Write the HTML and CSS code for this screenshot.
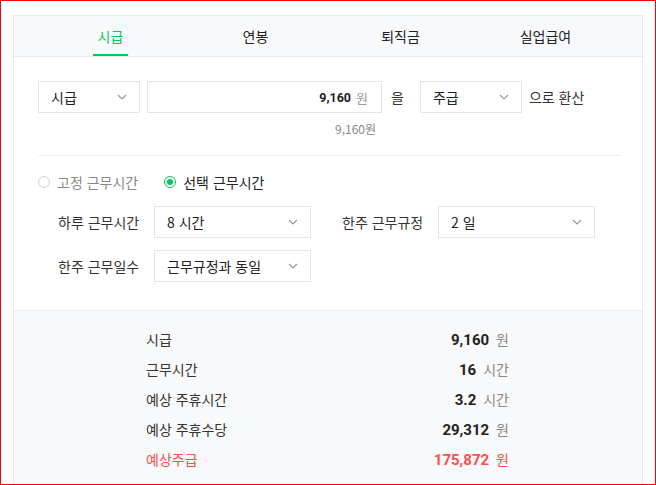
FILE: index.html
```html
<!DOCTYPE html>
<html lang="ko">
<head>
<meta charset="utf-8">
<title>시급 계산기</title>
<link rel="stylesheet" href="styles.css">
</head>
<body>
<div class="frame">
  <div class="calc">
    <div class="tabs">
      <div class="tab active"><span>시급</span></div>
      <div class="tab"><span>연봉</span></div>
      <div class="tab"><span>퇴직금</span></div>
      <div class="tab"><span>실업급여</span></div>
    </div>
    <div class="panel">
      <div class="conv">
        <div class="select narrow"><span>시급</span><svg class="chev" width="10" height="6" viewBox="0 0 10 6"><polyline points="1,1 5,5 9,1"/></svg></div>
        <div class="amount"><b>9,160</b><span class="unit">원</span></div>
        <span class="word w1">을</span>
        <div class="select narrow"><span>주급</span><svg class="chev" width="10" height="6" viewBox="0 0 10 6"><polyline points="1,1 5,5 9,1"/></svg></div>
        <span class="word w2">으로 환산</span>
      </div>
      <div class="hint">9,160원</div>
      <div class="divider"></div>
      <div class="radios">
        <div class="radio"><span class="dot"></span><span>고정 근무시간</span></div>
        <div class="radio on"><span class="dot"></span><span>선택 근무시간</span></div>
      </div>
      <div class="field-row">
        <div class="field"><span class="label">하루 근무시간</span><div class="select wide"><span>8 시간</span><svg class="chev" width="10" height="6" viewBox="0 0 10 6"><polyline points="1,1 5,5 9,1"/></svg></div></div>
        <div class="field"><span class="label">한주 근무규정</span><div class="select wide"><span>2 일</span><svg class="chev" width="10" height="6" viewBox="0 0 10 6"><polyline points="1,1 5,5 9,1"/></svg></div></div>
      </div>
      <div class="field-row">
        <div class="field"><span class="label">한주 근무일수</span><div class="select wide"><span>근무규정과 동일</span><svg class="chev" width="10" height="6" viewBox="0 0 10 6"><polyline points="1,1 5,5 9,1"/></svg></div></div>
      </div>
    </div>
    <div class="result">
      <div class="res-row"><span class="res-label">시급</span><span class="res-val"><b>9,160</b><span class="unit">원</span></span></div>
      <div class="res-row"><span class="res-label">근무시간</span><span class="res-val"><b>16</b><span class="unit">시간</span></span></div>
      <div class="res-row"><span class="res-label">예상 주휴시간</span><span class="res-val"><b>3.2</b><span class="unit">시간</span></span></div>
      <div class="res-row"><span class="res-label">예상 주휴수당</span><span class="res-val"><b>29,312</b><span class="unit">원</span></span></div>
      <div class="res-row total"><span class="res-label">예상주급</span><span class="res-val"><b>175,872</b><span class="unit">원</span></span></div>
    </div>
  </div>
</div>
</body>
</html>
```
FILE: styles.css
```css
* { box-sizing: border-box; }
html, body { margin: 0; padding: 0; background: #fff; }
body {
  font-family: "Noto Sans CJK KR", "Noto Sans", sans-serif;
  font-size: 14px;
  color: #222;
}
.frame {
  height: 485px;
  border: 1px solid #ff0000;
  padding: 14px 0 0 12px;
  overflow: hidden;
}
.calc {
  width: 630px;
  border: 1px solid #e8eaee;
  background: #fff;
}
.tabs {
  display: flex;
  padding: 0 24px;
  background: #f8f9fb;
  border-bottom: 1px solid #e8eaee;
  height: 41px;
}
.tab {
  flex: 1;
  display: flex;
  justify-content: center;
}
.tab span {
  display: block;
  padding: 2px 5px 0;
  line-height: 36px;
  height: 40px;
  border-bottom: 2px solid transparent;
  font-size: 14px;
  color: #222;
}
.tab.active span {
  color: #03c75a;
  border-bottom-color: #03c75a;
}
.panel {
  padding: 24px 20px 28px 24px;
}
.conv {
  display: flex;
  align-items: center;
}
.select {
  height: 32px;
  border: 1px solid #e3e5ea;
  background: #fff;
  display: flex;
  align-items: center;
  justify-content: space-between;
  padding: 0 12px 0 12px;
  font-size: 14px;
  color: #222;
}
.select.narrow { width: 102px; }
.select.wide { width: 157px; }
.chev polyline {
  fill: none;
  stroke: #999;
  stroke-width: 1.2;
}
.amount {
  width: 235px;
  height: 32px;
  margin-left: 7px;
  border: 1px solid #e3e5ea;
  display: flex;
  align-items: center;
  justify-content: flex-end;
  padding-right: 13px;
}
.amount b {
  font-family: Roboto, "Noto Sans CJK KR", sans-serif;
  font-weight: 700;
  font-size: 12.5px;
  color: #222;
}
.amount .unit {
  margin-left: 5px;
  color: #999;
  font-size: 13px;
}
.word { font-size: 14px; color: #333; }
.w1 { margin: 0 16px 0 9px; }
.w2 { margin-left: 7px; }
.hint {
  width: 235px;
  margin-left: 109px;
  margin-top: 8px;
  padding-right: 6px;
  text-align: right;
  font-size: 12px;
  line-height: 16px;
  color: #888;
}
.divider {
  height: 1px;
  background: #eef0f3;
  margin-top: 18px;
}
.radios {
  display: flex;
  gap: 26px;
  margin-top: 16px;
  height: 20px;
  align-items: center;
}
.radio {
  display: flex;
  align-items: center;
  gap: 7px;
  color: #888;
}
.radio .dot {
  width: 12px;
  height: 12px;
  border: 1px solid #cfd2d6;
  border-radius: 50%;
  background: #fff;
  display: flex;
  align-items: center;
  justify-content: center;
}
.radio.on { color: #222; }
.radio.on .dot { border-color: #03c75a; }
.radio.on .dot::after {
  content: "";
  width: 6px;
  height: 6px;
  border-radius: 50%;
  background: #03c75a;
}
.field-row {
  display: flex;
  gap: 31px;
  margin-top: 12px;
  padding-left: 20px;
}
.radios + .field-row { margin-top: 14px; }
.field {
  display: flex;
  align-items: center;
}
.label {
  width: 96px;
  color: #333;
}
.result {
  background: #f8f9fa;
  border-top: 1px solid #eceef1;
  padding: 13px 0 40px 132px;
}
.res-row {
  width: 363px;
  height: 30px;
  display: flex;
  align-items: center;
  justify-content: space-between;
}
.res-label { color: #333; }
.res-val { display: flex; align-items: baseline; }
.res-val b {
  font-family: Roboto, "Noto Sans CJK KR", sans-serif;
  font-weight: 700;
  font-size: 15px;
  color: #222;
}
.res-val .unit {
  margin-left: 7px;
  color: #888;
}
.total .res-label,
.total .res-val b,
.total .res-val .unit { color: #ff4d4d; }
```
